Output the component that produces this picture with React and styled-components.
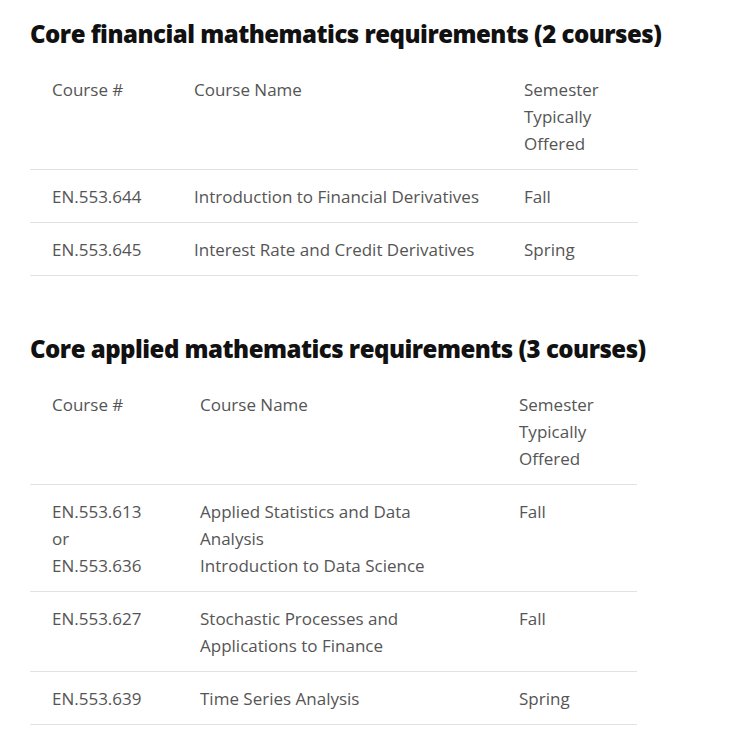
import styled, { createGlobalStyle } from "styled-components";

const GlobalStyle = createGlobalStyle`
    body {
        margin: 0;
        background: #ffffff;
    }
`;

const Page = styled.div`
    padding: 18px 30px 0;
    font-family: "Open Sans", "Liberation Sans", sans-serif;
`;

const Section = styled.section`
    margin-bottom: 57px;
`;

const Heading = styled.h2`
    margin: 0 0 13px;
    font-size: 24px;
    line-height: 32px;
    font-weight: 800;
    color: #111111;
    letter-spacing: -0.5px;
`;

const Table = styled.table`
    border-collapse: collapse;
    table-layout: fixed;
    width: ${(p) => p.$width}px;
    color: #555555;
    font-size: 17px;
    line-height: 27px;

    th,
    td {
        text-align: left;
        vertical-align: top;
        padding: 13px 22px 12px;
        border-bottom: 1px solid #e2e2e2;
    }

    th {
        font-weight: 400;
    }
`;

const sections = [
    {
        title: "Core financial mathematics requirements (2 courses)",
        width: 608,
        cols: [142, 330, 136],
        rows: [
            [["EN.553.644"], ["Introduction to Financial Derivatives"], "Fall"],
            [["EN.553.645"], ["Interest Rate and Credit Derivatives"], "Spring"],
        ],
    },
    {
        title: "Core applied mathematics requirements (3 courses)",
        width: 607,
        cols: [148, 319, 140],
        rows: [
            [
                ["EN.553.613", "or", "EN.553.636"],
                ["Applied Statistics and Data Analysis", "Introduction to Data Science"],
                "Fall",
            ],
            [["EN.553.627"], ["Stochastic Processes and Applications to Finance"], "Fall"],
            [["EN.553.639"], ["Time Series Analysis"], "Spring"],
        ],
    },
];

function Lines({ items }) {
    return items.map((t, i) => (
        <span key={i}>
            {i > 0 && <br />}
            {t}
        </span>
    ));
}

export default function App() {
    return (
        <Page>
            <GlobalStyle />
            {sections.map((s) => (
                <Section key={s.title}>
                    <Heading>{s.title}</Heading>
                    <Table $width={s.width}>
                        <colgroup>
                            {s.cols.map((w, i) => (
                                <col key={i} width={w} />
                            ))}
                        </colgroup>
                        <thead>
                            <tr>
                                <th>Course #</th>
                                <th>Course Name</th>
                                <th>Semester Typically Offered</th>
                            </tr>
                        </thead>
                        <tbody>
                            {s.rows.map((r) => (
                                <tr key={r[0][0]}>
                                    <td>
                                        <Lines items={r[0]} />
                                    </td>
                                    <td>
                                        <Lines items={r[1]} />
                                    </td>
                                    <td>{r[2]}</td>
                                </tr>
                            ))}
                        </tbody>
                    </Table>
                </Section>
            ))}
        </Page>
    );
}
